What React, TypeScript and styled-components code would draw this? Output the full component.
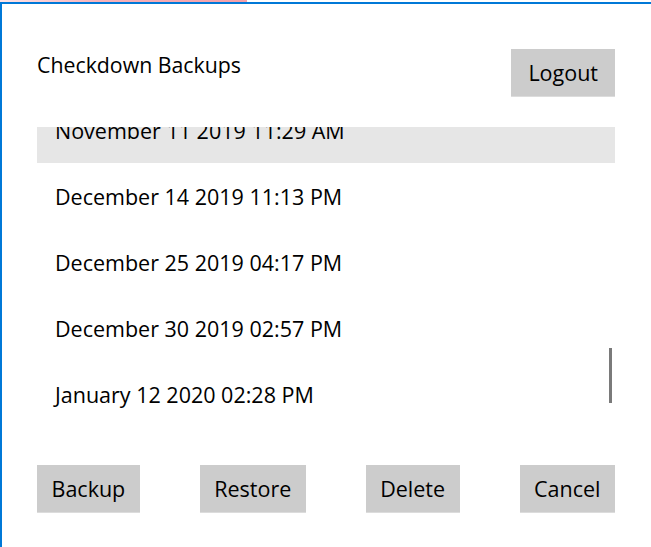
import React from 'react';
import styled, { createGlobalStyle } from 'styled-components';

const GlobalStyle = createGlobalStyle`
  html, body {
    margin: 0;
    padding: 0;
    background: #ffffff;
  }
  body {
    font-family: "Open Sans", "Noto Sans", "Liberation Sans", sans-serif;
    color: #000;
  }
`;

const TopStrip = styled.div`
  height: 2px;
  display: flex;
`;

const AccentSegment = styled.div`
  width: 247px;
  height: 2px;
  background: linear-gradient(90deg, #fde4e7 0%, #f7b3ba 40%, #f4a0a9 100%);
`;

const Window = styled.div`
  width: 651px;
  height: 545px;
  box-sizing: border-box;
  border-top: 2px solid #0078d7;
  border-left: 2px solid #0078d7;
  padding: 45px 36px 0 35px;
  display: flex;
  flex-direction: column;
`;

const Header = styled.div`
  display: flex;
  justify-content: space-between;
  align-items: flex-start;
  height: 78px;
`;

const Title = styled.h1`
  margin: 1px 0 0 0;
  font-size: 21.3px;
  font-weight: 400;
  line-height: 30px;
`;

const Button = styled.button<{ $wide?: boolean }>`
  height: 48px;
  padding: 0 ${(p) => (p.$wide ? '17px' : '14.5px')};
  border: none;
  border-bottom: 1px solid #dcdcdc;
  background: #cccccc;
  color: #000;
  font-family: inherit;
  font-size: 21.5px;
  line-height: 28px;
  cursor: pointer;
`;

const ListFrame = styled.div`
  position: relative;
  height: 304px;
  overflow: hidden;
`;

const List = styled.ul`
  list-style: none;
  margin: -30px 0 0 0;
  padding: 0;
`;

const Item = styled.li<{ $selected?: boolean }>`
  height: 66px;
  display: flex;
  align-items: center;
  padding-left: 18px;
  font-size: 21.5px;
  background: ${(p) => (p.$selected ? '#e6e6e6' : 'transparent')};
`;

const ScrollThumb = styled.div`
  position: absolute;
  right: 3px;
  top: 221px;
  width: 3px;
  height: 55px;
  background: #7a7a7a;
`;

const Footer = styled.div`
  margin-top: 34px;
  display: flex;
  justify-content: space-between;
`;

const backups = [
  'November 11 2019 11:29 AM',
  'December 14 2019 11:13 PM',
  'December 25 2019 04:17 PM',
  'December 30 2019 02:57 PM',
  'January 12 2020 02:28 PM',
];

export default function App() {
  return (
    <>
      <GlobalStyle />
      <TopStrip>
        <AccentSegment />
      </TopStrip>
      <Window>
        <Header>
          <Title>Checkdown Backups</Title>
          <Button $wide>Logout</Button>
        </Header>
        <ListFrame>
          <List>
            {backups.map((b, i) => (
              <Item key={b} $selected={i === 0}>
                {b}
              </Item>
            ))}
          </List>
          <ScrollThumb />
        </ListFrame>
        <Footer>
          <Button>Backup</Button>
          <Button>Restore</Button>
          <Button>Delete</Button>
          <Button>Cancel</Button>
        </Footer>
      </Window>
    </>
  );
}
